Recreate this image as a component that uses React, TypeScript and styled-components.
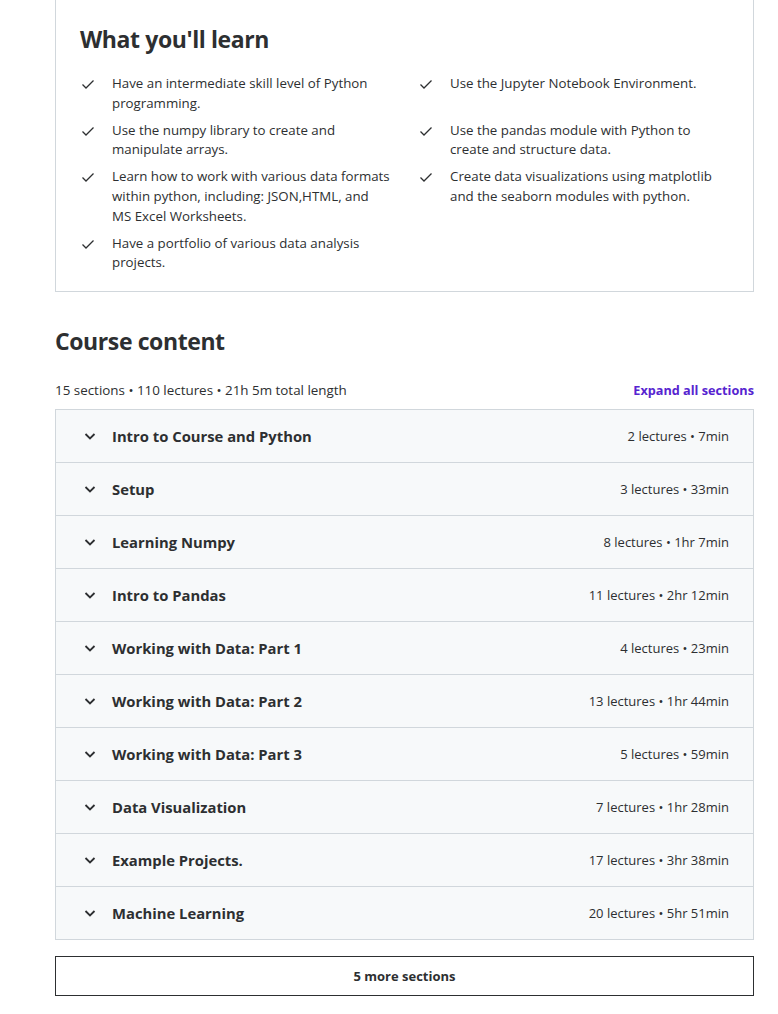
import React from "react";
import styled, { createGlobalStyle } from "styled-components";

const learnItems = [
  "Have an intermediate skill level of Python programming.",
  "Use the Jupyter Notebook Environment.",
  "Use the numpy library to create and manipulate arrays.",
  "Use the pandas module with Python to create and structure data.",
  "Learn how to work with various data formats within python, including: JSON,HTML, and MS Excel Worksheets.",
  "Create data visualizations using matplotlib and the seaborn modules with python.",
  "Have a portfolio of various data analysis projects.",
];

const sections = [
  { title: "Intro to Course and Python", meta: "2 lectures • 7min" },
  { title: "Setup", meta: "3 lectures • 33min" },
  { title: "Learning Numpy", meta: "8 lectures • 1hr 7min" },
  { title: "Intro to Pandas", meta: "11 lectures • 2hr 12min" },
  { title: "Working with Data: Part 1", meta: "4 lectures • 23min" },
  { title: "Working with Data: Part 2", meta: "13 lectures • 1hr 44min" },
  { title: "Working with Data: Part 3", meta: "5 lectures • 59min" },
  { title: "Data Visualization", meta: "7 lectures • 1hr 28min" },
  { title: "Example Projects.", meta: "17 lectures • 3hr 38min" },
  { title: "Machine Learning", meta: "20 lectures • 5hr 51min" },
];

const CheckIcon = () => (
  <svg width="16" height="16" viewBox="0 0 16 16" fill="none">
    <path d="M2.5 8.5 L6 12 L13.5 4.5" stroke="#2d2f31" strokeWidth="1.3" />
  </svg>
);

const ChevronIcon = () => (
  <svg width="12" height="12" viewBox="0 0 12 12" fill="none">
    <path d="M1.5 4 L6 8.5 L10.5 4" stroke="#2d2f31" strokeWidth="1.8" />
  </svg>
);

const App: React.FC = () => {
  return (
    <>
      <GlobalStyle />
      <Page>
        <LearnBox>
          <BoxTitle>What you'll learn</BoxTitle>
          <LearnGrid>
            {learnItems.map((t) => (
              <LearnItem key={t}>
                <IconSlot>
                  <CheckIcon />
                </IconSlot>
                <span>{t}</span>
              </LearnItem>
            ))}
          </LearnGrid>
        </LearnBox>

        <ContentHeading>Course content</ContentHeading>
        <MetaBar>
          <span>15 sections • 110 lectures • 21h 5m total length</span>
          <ExpandLink>Expand all sections</ExpandLink>
        </MetaBar>

        <Accordion>
          {sections.map((s) => (
            <SectionRow key={s.title}>
              <ChevronSlot>
                <ChevronIcon />
              </ChevronSlot>
              <SectionTitle>{s.title}</SectionTitle>
              <SectionMeta>{s.meta}</SectionMeta>
            </SectionRow>
          ))}
        </Accordion>

        <MoreButton>5 more sections</MoreButton>
      </Page>
    </>
  );
};

export default App;

const GlobalStyle = createGlobalStyle`
  html, body {
    margin: 0;
    padding: 0;
    background: #fff;
    font-family: "Open Sans", "Noto Sans", sans-serif;
    color: #2d2f31;
  }
`;

const Page = styled.div`
  width: 699px;
  margin-left: 55px;
  margin-top: -1px;
  padding-bottom: 18px;
`;

const LearnBox = styled.div`
  border: 1px solid #d1d7dc;
  padding: 24px 24px 18px;
`;

const BoxTitle = styled.h2`
  margin: 0 0 20px;
  font-size: 23px;
  line-height: 30px;
  font-weight: 700;
  letter-spacing: -0.4px;
`;

const LearnGrid = styled.ul`
  list-style: none;
  margin: 0;
  padding: 0;
  display: grid;
  grid-template-columns: 310.5px 1fr;
  column-gap: 27.5px;
  row-gap: 7.5px;
`;

const LearnItem = styled.li`
  display: flex;
  font-size: 13.3px;
  line-height: 19.6px;
  color: #2d2f31;
`;

const IconSlot = styled.span`
  flex: 0 0 16px;
  margin-right: 16px;
  padding-top: 2px;
`;

const ContentHeading = styled.h2`
  margin: 34px 0 0;
  font-size: 23px;
  line-height: 30px;
  font-weight: 700;
  letter-spacing: -0.4px;
`;

const MetaBar = styled.div`
  display: flex;
  justify-content: space-between;
  align-items: center;
  margin-top: 24px;
  margin-bottom: 9px;
  font-size: 13.4px;
  line-height: 20px;
`;

const ExpandLink = styled.span`
  color: #5624d0;
  font-size: 12.7px;
  font-weight: 700;
  cursor: pointer;
`;

const Accordion = styled.div`
  border: 1px solid #d1d7dc;
  border-bottom: none;
`;

const SectionRow = styled.div`
  display: flex;
  align-items: center;
  height: 52px;
  padding: 0 24px;
  background: #f7f9fa;
  border-bottom: 1px solid #d1d7dc;
`;

const ChevronSlot = styled.span`
  display: flex;
  justify-content: center;
  width: 16px;
  margin-left: 2px;
  margin-right: 14px;
`;

const SectionTitle = styled.span`
  flex: 1;
  font-size: 14.8px;
  font-weight: 700;
`;

const SectionMeta = styled.span`
  font-size: 13px;
`;

const MoreButton = styled.button`
  display: block;
  width: 100%;
  height: 40px;
  margin-top: 16px;
  background: #fff;
  border: 1px solid #2d2f31;
  font-family: inherit;
  font-size: 13px;
  font-weight: 700;
  color: #2d2f31;
  cursor: pointer;
`;
